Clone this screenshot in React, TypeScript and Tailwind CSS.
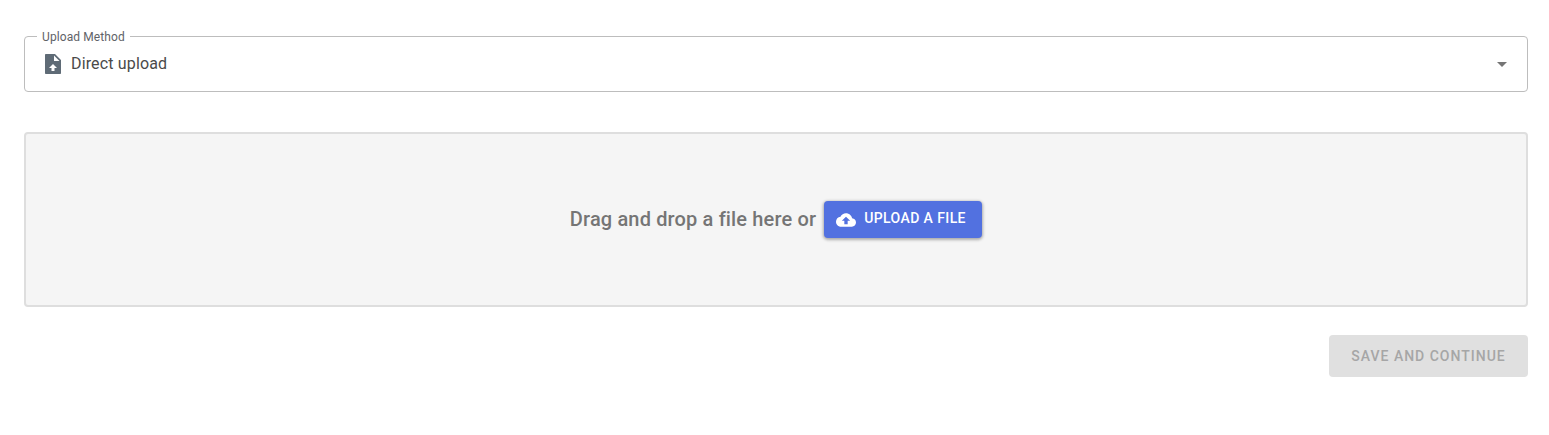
export default function App() {
  return (
    <div className="min-h-[435px] bg-white pl-6 pr-[21px] pt-9 font-['Roboto',sans-serif]">
      {/* Upload method select */}
      <div className="relative flex h-14 items-center rounded border border-[#bdbdbd] pl-4 pr-[13px]">
        <span className="absolute -top-[7px] left-[12px] bg-white px-[5px] text-xs leading-[14px] tracking-[0.1px] text-[#5f6368]">
          Upload Method
        </span>
        <svg width="24" height="24" viewBox="0 0 24 24" fill="#5f6b76" className="shrink-0">
          <path d="M14 2H4.800a.8.8 0 0 0-.8.8v18.400a.8.8 0 0 0 .8.8h14.400a.8.8 0 0 0 .8-.8V8l-6-6zm-.5 14v3h-3v-3H8l4-4 4 4h-2.500zM13 9V3.500L18.500 9H13z" />
        </svg>
        <span className="ml-[6px] flex-1 text-base tracking-[0.15px] text-[#4a4a4a]">Direct upload</span>
        <svg width="24" height="24" viewBox="0 0 24 24" fill="#757575" className="shrink-0">
          <path d="M7 10l5 5 5-5z" />
        </svg>
      </div>

      {/* Drop zone */}
      <div className="mt-10 flex h-[175px] items-center justify-center rounded border-2 border-[#dedede] bg-[#f5f5f5]">
        <span className="-translate-y-px text-[20px] font-medium leading-6 tracking-[0.15px] text-[#757575]">
          Drag and drop a file here or
        </span>
        <button className="ml-2 flex h-[37px] w-[158px] items-center rounded bg-[#5271e0] pb-[3px] pl-3 text-sm font-medium tracking-[0.4px] text-white shadow-[0_1px_3px_1px_rgba(0,0,0,0.3)]">
          <svg width="20" height="20" viewBox="0 0 24 24" fill="white" className="mt-[3px] shrink-0">
            <path d="M19.350 10.040C18.670 6.590 15.640 4 12 4 9.110 4 6.600 5.640 5.350 8.040 2.340 8.360 0 10.910 0 14c0 3.310 2.690 6 6 6h13c2.760 0 5-2.240 5-5 0-2.640-2.050-4.780-4.650-4.960zM14 13v4h-4v-4H7l5-5 5 5h-3z" />
          </svg>
          <span className="ml-2">UPLOAD A FILE</span>
        </button>
      </div>

      {/* Footer */}
      <div className="mt-7 flex justify-end">
        <button disabled className="h-[42px] w-[199px] rounded bg-[#e0e0e0] text-sm font-medium tracking-[1px] text-[#a6a6a6]">
          SAVE AND CONTINUE
        </button>
      </div>
    </div>
  );
}
